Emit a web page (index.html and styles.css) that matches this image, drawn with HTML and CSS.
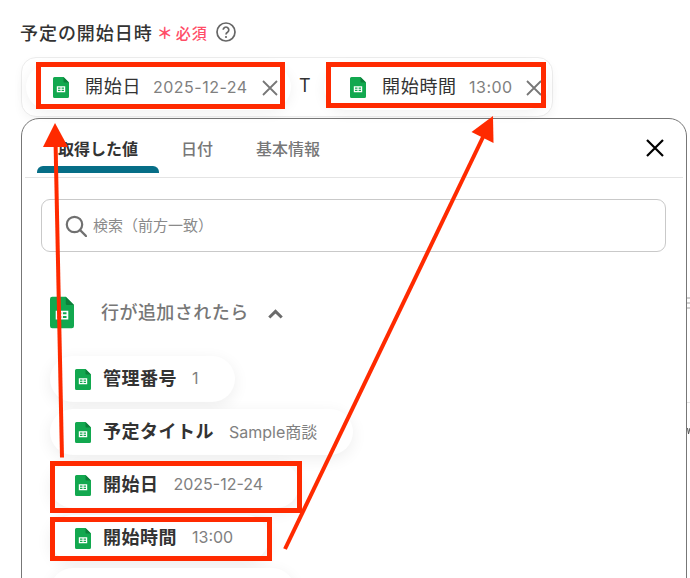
FILE: index.html
```html
<!DOCTYPE html>
<html lang="ja">
<head>
<meta charset="utf-8">
<title>予定の開始日時</title>
<link rel="stylesheet" href="styles.css">
</head>
<body>
<svg class="defs" width="0" height="0" aria-hidden="true">
  <symbol id="sheet" viewBox="0 0 16 21">
    <path d="M1.5 0H10.5L16 5.5V19.500A1.500 1.500 0 0 1 14.500 21H1.500A1.500 1.500 0 0 1 0 19.500V1.500A1.500 1.500 0 0 1 1.500 0Z" fill="#12a84f"/>
    <path d="M10.500 0L16 5.500H11.500A1 1 0 0 1 10.500 4.500Z" fill="#0c7f3a"/>
    <path d="M3.800 9.300H12.200V15.200H3.800ZM5 10.400V11.700H7.500V10.400ZM8.600 10.400V11.700H11V10.400ZM5 12.800V14.100H7.500V12.800ZM8.600 12.800V14.100H11V12.800Z" fill="#fff" fill-rule="evenodd"/>
  </symbol>
</svg>
<main class="page">
  <div class="label-row">
    <span class="label">予定の開始日時</span>
    <span class="req-star">＊</span>
    <span class="req">必須</span>
    <svg class="help" viewBox="0 0 20 20" width="20" height="20"><circle cx="10" cy="10" r="9" fill="none" stroke="#666" stroke-width="1.700"/><path d="M7.200 7.800a2.800 2.800 0 1 1 4.300 2.400c-1 .6-1.500 1.100-1.500 2.200" fill="none" stroke="#666" stroke-width="1.700"/><circle cx="10" cy="15" r="1.100" fill="#666"/></svg>
  </div>
  <div class="field">
    <div class="chip chip-date">
      <svg class="chip-icon"><use href="#sheet"/></svg>
      <span class="chip-name">開始日</span>
      <span class="chip-value">2025-12-24</span>
      <svg class="chip-x" viewBox="0 0 16 16"><path d="M1 1L15 15M15 1L1 15" stroke="#777" stroke-width="1.800" fill="none"/></svg>
    </div>
    <span class="sep">T</span>
    <div class="chip chip-time">
      <svg class="chip-icon"><use href="#sheet"/></svg>
      <span class="chip-name">開始時間</span>
      <span class="chip-value">13:00</span>
      <svg class="chip-x" viewBox="0 0 16 16"><path d="M1 1L15 15M15 1L1 15" stroke="#777" stroke-width="1.800" fill="none"/></svg>
    </div>
  </div>
  <section class="panel">
    <div class="tabs">
      <span class="tab tab-active">取得した値</span>
      <span class="tab tab-date">日付</span>
      <span class="tab tab-info">基本情報</span>
      <svg class="close" viewBox="0 0 18 18"><path d="M1 1L17 17M17 1L1 17" stroke="#000" stroke-width="2.200" fill="none"/></svg>
    </div>
    <div class="search">
      <svg class="search-icon" viewBox="0 0 22 22"><circle cx="9.500" cy="9.500" r="7.700" fill="none" stroke="#707070" stroke-width="2.200"/><path d="M15 15L21 21" stroke="#707070" stroke-width="2.400" stroke-linecap="round"/></svg>
      <span class="placeholder">検索（前方一致）</span>
    </div>
    <div class="group">
      <svg class="group-icon"><use href="#sheet"/></svg>
      <span class="group-name">行が追加されたら</span>
      <svg class="chevron" viewBox="0 0 14 9"><path d="M1.200 7.800L7 2L12.800 7.800" fill="none" stroke="#6b6b6b" stroke-width="2.800"/></svg>
    </div>
    <ul class="pills">
      <li class="pill"><svg class="pill-icon"><use href="#sheet"/></svg><span class="pill-name">管理番号</span><span class="pill-value">1</span></li>
      <li class="pill"><svg class="pill-icon"><use href="#sheet"/></svg><span class="pill-name">予定タイトル</span><span class="pill-value">Sample商談</span></li>
      <li class="pill"><svg class="pill-icon"><use href="#sheet"/></svg><span class="pill-name">開始日</span><span class="pill-value">2025-12-24</span></li>
      <li class="pill"><svg class="pill-icon"><use href="#sheet"/></svg><span class="pill-name">開始時間</span><span class="pill-value">13:00</span></li>
      <li class="pill pill-cut"></li>
    </ul>
  </section>
</main>
<svg class="marks" viewBox="0 0 690 578" width="690" height="578" aria-hidden="true">
  <path d="M687 298H690M687 303H690M687 308H690" stroke="#a0a0a0" stroke-width="1" fill="none"/>
  <path d="M687 402.500H690" stroke="#e4e4e4" stroke-width="1" fill="none"/>
  <path d="M687.500 428L688.500 434L690 428" stroke="#555" stroke-width="1" fill="none"/>
  <g fill="none" stroke="#ff2a00" stroke-width="5">
    <rect x="38.500" y="64.500" width="244" height="42"/>
    <rect x="328.500" y="64.500" width="215" height="41"/>
    <rect x="52.500" y="463.500" width="247" height="47"/>
    <rect x="52.500" y="519.500" width="217" height="39"/>
    <path d="M62 457.500L55.500 140" stroke-width="4"/>
    <path d="M285 549L484 135" stroke-width="4"/>
  </g>
  <path d="M55 123L68 147H43Z" fill="#ff2a00"/>
  <path d="M493 116L493.500 143L471.500 132Z" fill="#ff2a00"/>
</svg>
</body>
</html>
```
FILE: styles.css
```css
* { box-sizing: border-box; }
html, body { margin: 0; height: 578px; overflow: hidden; background: #fff; }
body { font-family: "Noto Sans CJK JP", "Noto Sans", sans-serif; color: #333; position: relative; }
.defs { position: absolute; }
.page { width: 690px; height: 578px; overflow: hidden; padding: 20px 3px 0 21px; }

.label-row { display: flex; align-items: center; height: 24px; margin-bottom: 13px; }
.label { font-size: 18px; letter-spacing: .95px; font-weight: 500; color: #333; line-height: 24px; margin-left: -1px; }
.req-star { color: #ff4d67; font-size: 16px; line-height: 24px; font-weight: 700; margin-left: 4px; width: 16px; }
.req { color: #ff4d67; font-size: 15px; margin-left: 3px; letter-spacing: 1.2px; font-weight: 500; }
.help { margin-left: 8px; }

.field { width: 532px; height: 60px; border: 1px solid #ececec; border-radius: 15px; display: flex; align-items: center; background: #fff; box-shadow: 0 4px 10px rgba(0,0,0,.04); padding-left: 4px; }
.chip { height: 46px; border-radius: 23px; display: flex; align-items: center; background: #fff; box-shadow: 0 3px 14px rgba(0,0,0,.06); flex: none; }
.chip-date { width: 265px; padding-left: 27px; }
.chip-time { width: 224px; padding-left: 26px; }
.chip-icon { width: 16px; height: 21px; flex: none; }
.chip-name { font-size: 18px; letter-spacing: .7px; margin: 0 0 4px 16px; color: #333; }
.chip-date .chip-name { width: 68px; }
.chip-time .chip-name { width: 87px; }
.chip-value { font-family: "Inter", "Noto Sans", sans-serif; font-size: 16px; letter-spacing: .5px; color: #808080; flex: none; margin-bottom: 1px; }
.chip-date .chip-value { width: 109px; }
.chip-time .chip-value { width: 57px; }
.chip-x { width: 16px; height: 16px; flex: none; margin-top: 1px; }
.sep { font-family: "Inter", sans-serif; font-size: 18px; width: 33px; flex: none; padding: 0 0 3px 8px; color: #333; }

.panel { margin-top: 1px; height: 520px; border: 1px solid #777; border-radius: 18px; background: #fff; padding: 0 3px; }
.tabs { height: 59px; border-bottom: 1px solid #e4e4e4; position: relative; display: flex; align-items: center; }
.tab { font-size: 16px; font-weight: 500; color: #777; letter-spacing: 0; position: relative; }
.tab-active { color: #333; margin-left: 33px; font-weight: 700; }
.tab-active::after { content: ""; position: absolute; left: -21px; right: -21px; top: 30px; height: 7px; background: #066e87; border-radius: 6px 6px 0 0; }
.tab-date { margin-left: 43px; }
.tab-info { margin-left: 43px; }
.close { width: 18px; height: 18px; margin-left: auto; margin-right: 19px; }

.search { margin: 21px 0 0 16px; width: 625px; height: 53px; border: 1px solid #c9c9c9; border-radius: 9px; display: flex; align-items: center; padding-left: 23px; }
.search-icon { width: 22px; height: 22px; flex: none; }
.placeholder { font-size: 15px; color: #8a8a8a; margin: 0 0 2px 6px; }

.group { display: flex; align-items: center; margin: 44px 0 0 25px; height: 33px; }
.group-icon { width: 24px; height: 33px; flex: none; }
.group-name { font-size: 18px; font-weight: 500; color: #777; letter-spacing: .45px; margin: 0 0 3px 27px; }
.chevron { width: 15px; height: 10px; margin-left: 19px; margin-top: 2px; }

.pills { list-style: none; margin: 27px 0 0 25px; padding: 0; display: flex; flex-direction: column; align-items: flex-start; gap: 7px; }
.pill { height: 46px; border-radius: 23px; display: flex; align-items: center; background: #fff; box-shadow: 0 4px 16px rgba(0,0,0,.07); padding: 0 36px 0 25px; }
.pill-cut { width: 245px; }
.pill-icon { width: 16px; height: 21px; flex: none; }
.pill-name { font-size: 18px; font-weight: 700; color: #333; letter-spacing: .5px; margin: 0 0 4px 12px; }
.pill-value { font-family: "Inter", "Noto Sans CJK JP", sans-serif; font-size: 16px; color: #808080; margin: 0 0 3px 15px; }

.marks { position: absolute; left: 0; top: 0; pointer-events: none; }
```
